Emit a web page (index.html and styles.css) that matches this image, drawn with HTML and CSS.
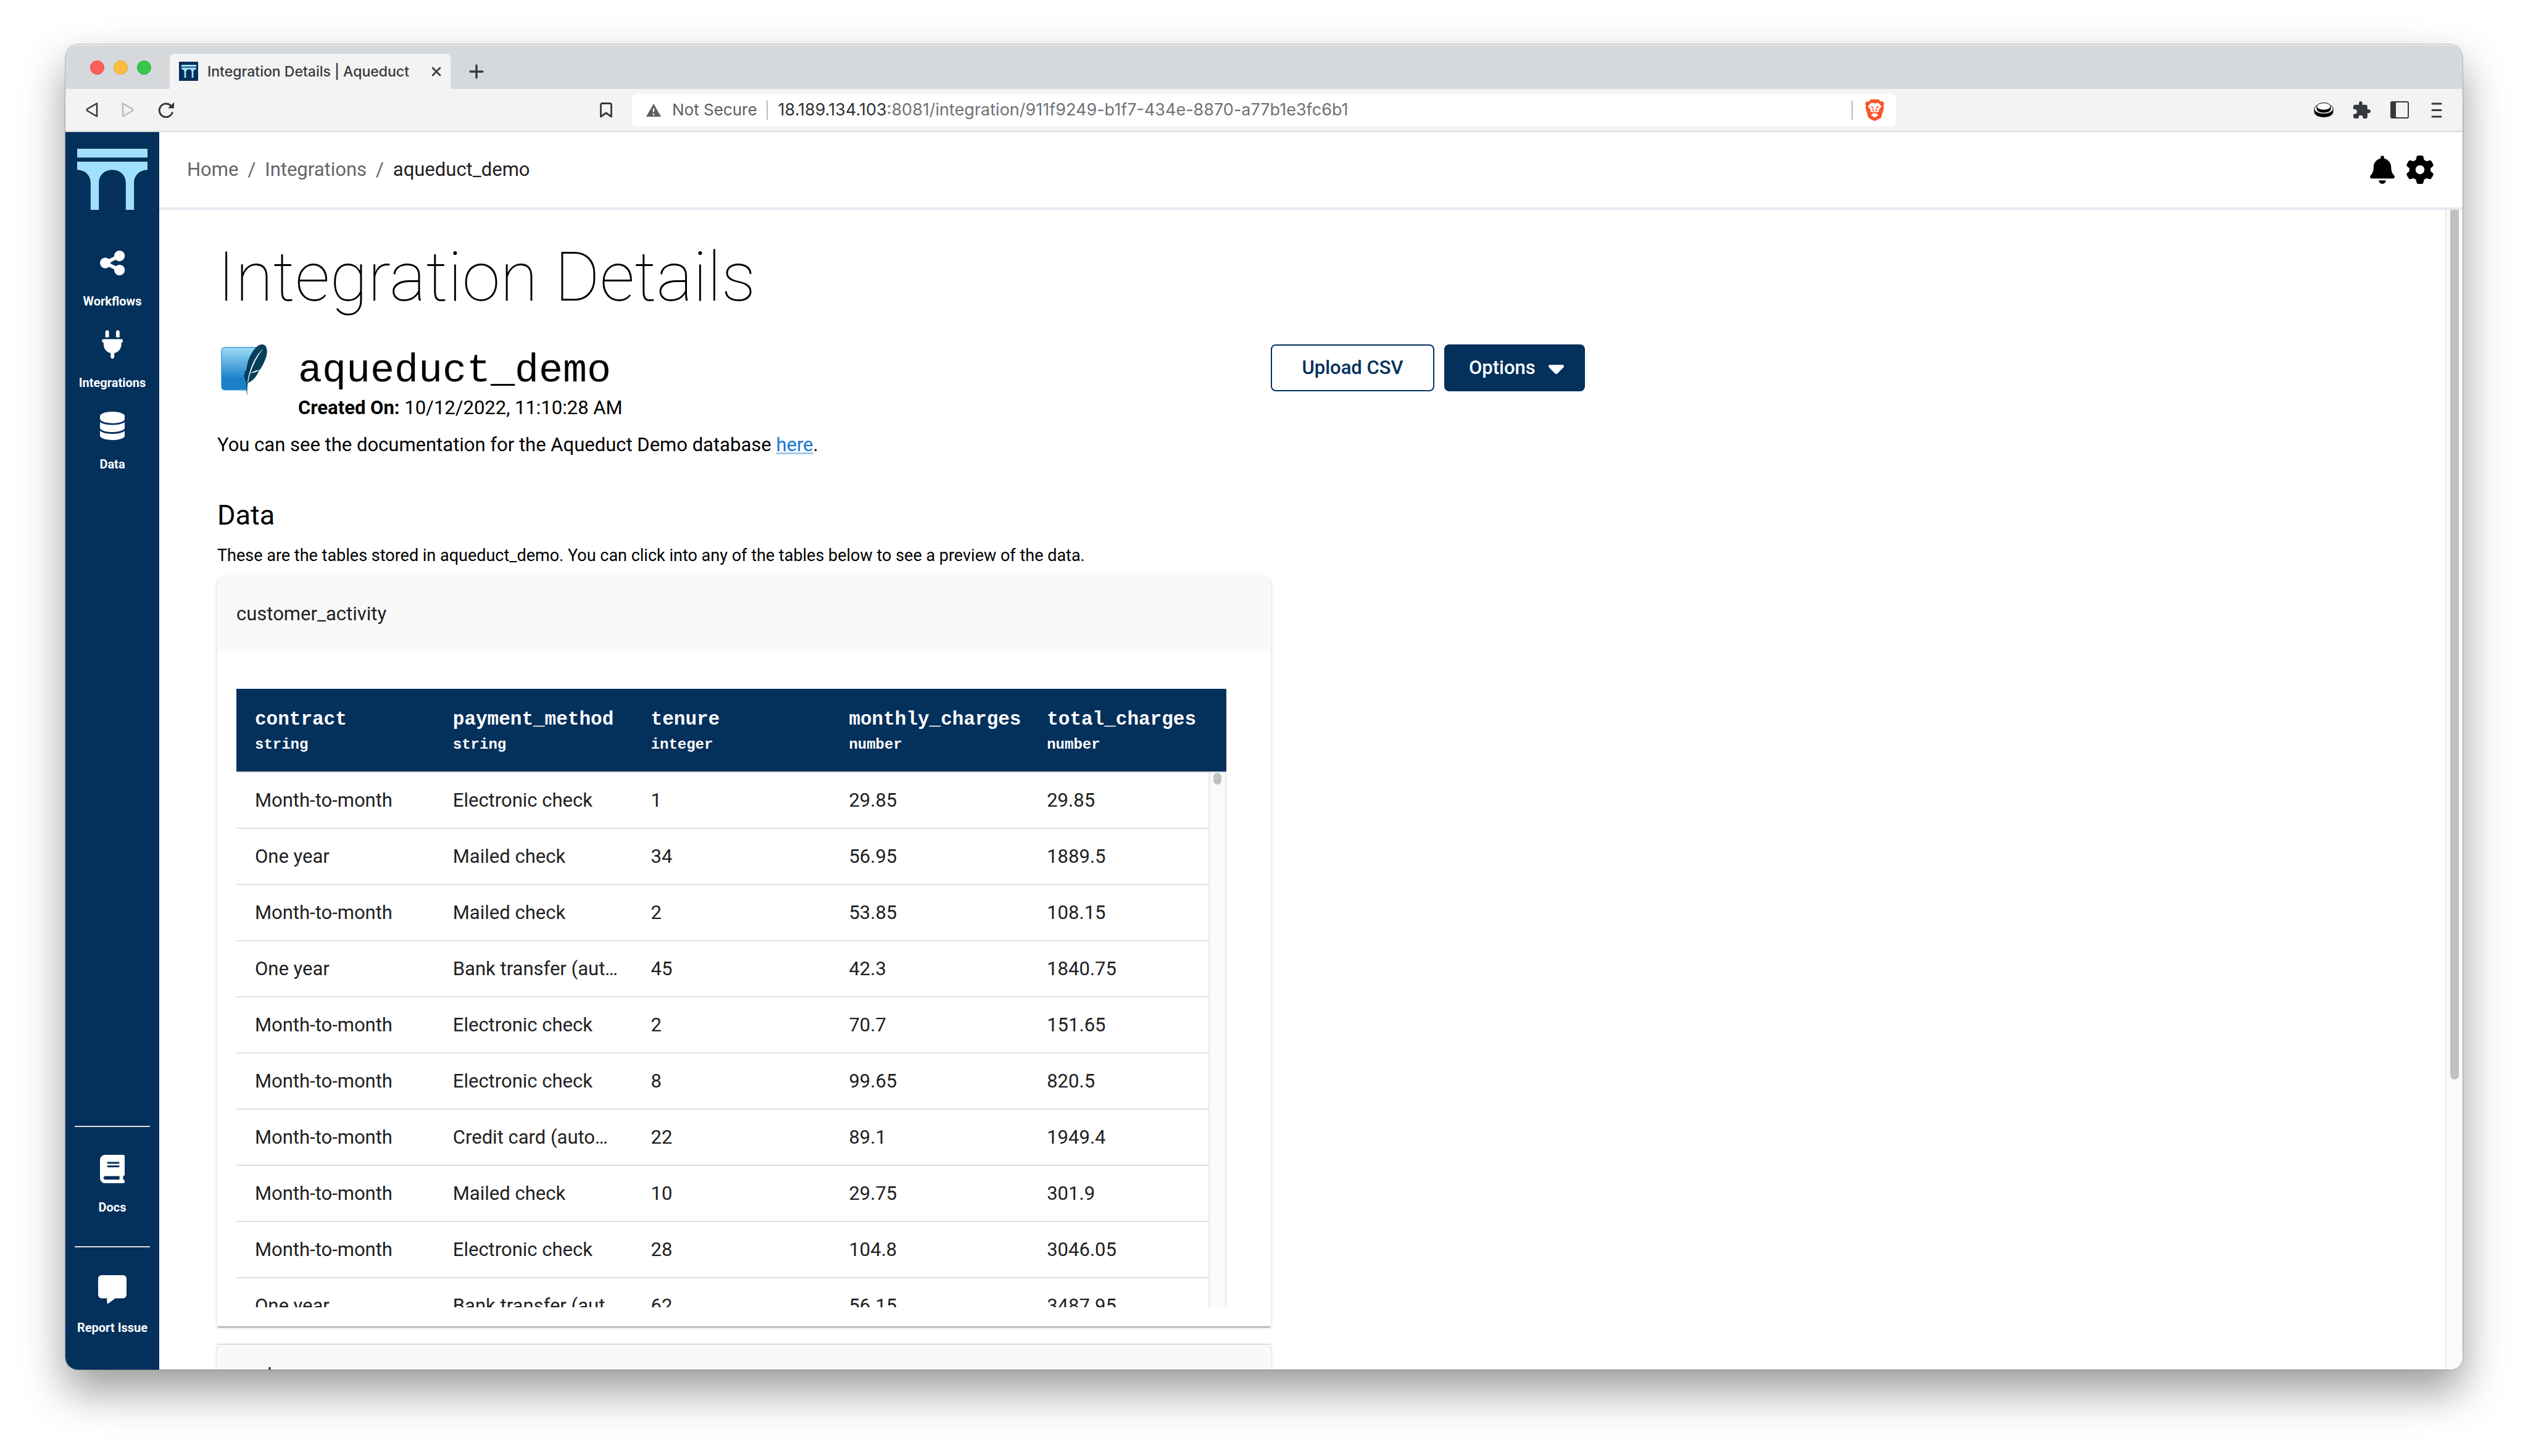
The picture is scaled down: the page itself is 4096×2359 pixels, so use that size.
FILE: index.html
```html
<!DOCTYPE html>
<html lang="en">
<head>
<meta charset="utf-8">
<meta name="viewport" content="width=device-width, initial-scale=1">
<title>Integration Details | Aqueduct</title>
<link rel="stylesheet" href="styles.css">
</head>
<body>
<svg class="sprite" aria-hidden="true">
  <symbol id="aqueduct" viewBox="0 0 120 104">
    <path d="M0 0H120V15H0zM0 22H120V36C106 36 97 46 97 58V104H83V58C83 45 73 36 60 36S37 45 37 58V104H23V58C23 46 14 36 0 36z"/>
  </symbol>
</svg>
<div class="window">
  <header class="tabstrip">
    <div class="lights"><span class="light red"></span><span class="light yellow"></span><span class="light green"></span></div>
    <div class="tab">
      <span class="favicon"><svg width="24" height="21"><use href="#aqueduct"/></svg></span>
      <span class="tab-title">Integration Details | Aqueduct</span>
      <button class="plain" aria-label="Close tab"><svg width="16" height="16" viewBox="0 0 16 16" stroke="#35393d" stroke-width="2.6" stroke-linecap="round"><path d="M2 2l12 12M14 2L2 14"/></svg></button>
    </div>
    <button class="plain new-tab" aria-label="New tab"><svg width="24" height="24" viewBox="0 0 24 24" stroke="#35393d" stroke-width="3.4" stroke-linecap="round"><path d="M12 2v20M2 12h20"/></svg></button>
  </header>

  <div class="toolbar">
    <div class="nav-buttons">
      <button class="plain" aria-label="Back"><svg width="20" height="26" viewBox="0 0 20 26" fill="none" stroke="#35393d" stroke-width="2.6" stroke-linejoin="round"><path d="M18 2.5v21L2.5 14.500q-1.200-1.500 0-3z"/></svg></button>
      <button class="plain" aria-label="Forward"><svg width="20" height="26" viewBox="0 0 20 26" fill="none" stroke="#bcbdbe" stroke-width="2.6" stroke-linejoin="round"><path d="M2 2.500v21l15.500-9q1.200-1.500 0-3z"/></svg></button>
      <button class="plain" aria-label="Reload"><svg width="28" height="26" viewBox="0 0 28 26" fill="none" stroke="#35393d" stroke-width="3"><path d="M22 6.500A10.800 10.800 0 1 0 24.500 16.500"/><path d="M26.500 1.500v8.500h-8.500z" fill="#35393d" stroke-width="1" stroke-linejoin="round"/></svg></button>
      <button class="plain bookmark" aria-label="Bookmark"><svg width="20" height="25" viewBox="0 0 20 25" fill="none" stroke="#35393d" stroke-width="2.8" stroke-linejoin="round"><path d="M1.500 23V4q0-2.500 2.500-2.500H16q2.500 0 2.500 2.500V23L10 17z"/></svg></button>
    </div>
    <div class="address">
      <svg width="24" height="21" viewBox="0 0 24 21"><path d="M12 0L24 21H0z" fill="#5b6064"/><path d="M12 7.500v6M12 16v2.500" stroke="#fff" stroke-width="2.400"/></svg>
      <span class="secure">Not Secure</span>
      <span class="rule"></span>
      <span class="url"><span class="host">18.189.134.103</span>:8081/integration/911f9249-b1f7-434e-8870-a77b1e3fc6b1</span>
      <span class="rule"></span>
      <button class="plain shield" aria-label="Brave Shields"><svg width="31" height="35" viewBox="0 0 62 70"><path d="M18 0H44L50 7L56 6L62 14L59 20L61 27L52 58Q50 62 31 70Q12 62 10 58L1 27L3 20L0 14L6 6L12 7z" fill="#fb542b"/><path d="M19 11L31 13L43 11L53 23L44 34L45 39L36 43V46L43 51L31 59L19 51L26 46V43L17 39L18 34L9 23z" fill="#fff"/><path d="M16 22L27 24L26 29L30 39L24 37L25 30zM46 22L35 24L36 29L32 39L38 37L37 30z" fill="#fb542b"/><path d="M24 42L31 47L38 42L31 40z" fill="#fb542b"/></svg></button>
    </div>
    <div class="extensions">
      <button class="plain" aria-label="Extension"><svg width="32" height="24" viewBox="0 0 32 24"><path d="M0.500 10v5C0.500 20 7 24 16 24s15.500-4 15.500-9v-5z"/><ellipse cx="16" cy="10.500" rx="15.200" ry="8" fill="#fff" stroke="#000"/><path d="M4.500 6.500v4C4.500 14 9 16.500 16 16.500s11.500-2.500 11.500-6v-4z"/><ellipse cx="16" cy="6.500" rx="11.200" ry="5.800" fill="#fff" stroke="#000"/></svg></button>
      <button class="plain" aria-label="Extensions"><svg width="28" height="28" viewBox="0 0 86 86"><path d="M28 18V9Q28 0 36 0T45 9V18H61Q70 18 70 27V41H76Q86 42 86 50T76 60H70V77Q70 86 61 86H48V79Q46 70 37 70T26 79V86H9Q0 86 0 77V64H8Q18 61 18 52T8 40H0V27Q0 18 9 18z" fill="#35393d"/></svg></button>
      <button class="plain" aria-label="Sidebar"><svg width="30" height="28" viewBox="0 0 30 28"><rect x="1" y="1" width="28" height="26" rx="2" fill="none" stroke="#35393d" stroke-width="2"/><path d="M1 1H9V27H1z" fill="#35393d"/></svg></button>
      <button class="plain menu" aria-label="Menu"><svg width="18" height="25" viewBox="0 0 18 25" stroke="#35393d" stroke-width="3" stroke-linecap="round"><path d="M2 2h14M2 12.500h14M2 23h14"/></svg></button>
    </div>
  </div>

  <div class="app">
    <nav class="sidebar">
      <a class="logo" href="#" aria-label="Aqueduct"><svg width="114" height="99"><use href="#aqueduct"/></svg></a>
      <a class="nav-item" href="#"><svg height="46" viewBox="0 0 448 512"><path d="M352 224c53 0 96-43 96-96s-43-96-96-96s-96 43-96 96c0 4 .2 8 .7 11.9l-94.1 47C145.4 170.200 121.900 160 96 160c-53 0-96 43-96 96s43 96 96 96c25.900 0 49.400-10.200 66.600-26.900l94.100 47c-.5 3.900-.7 7.800-.7 11.900c0 53 43 96 96 96s96-43 96-96s-43-96-96-96c-25.900 0-49.400 10.200-66.600 26.900l-94.100-47c.5-3.900 .7-7.800 .7-11.900s-.2-8-.7-11.900l94.100-47C302.600 213.800 326.100 224 352 224z"/></svg><span>Workflows</span></a>
      <a class="nav-item" href="#"><svg height="46" viewBox="0 0 384 512"><path d="M96 0C78.300 0 64 14.300 64 32v96h64V32c0-17.700-14.300-32-32-32zM288 0c-17.700 0-32 14.300-32 32v96h64V32c0-17.700-14.300-32-32-32zM32 160c-17.700 0-32 14.300-32 32s14.300 32 32 32v32c0 77.400 55 142 128 156.800V480c0 17.700 14.300 32 32 32s32-14.300 32-32V412.800C297 398 352 333.400 352 256V224c17.700 0 32-14.300 32-32s-14.300-32-32-32H32z"/></svg><span>Integrations</span></a>
      <a class="nav-item" href="#"><svg height="46" viewBox="0 0 448 512"><path d="M448 80v48c0 44.200-100.300 80-224 80S0 172.200 0 128V80C0 35.800 100.300 0 224 0S448 35.800 448 80zM393.200 214.700c20.800-7.400 39.900-16.900 54.800-28.600V288c0 44.200-100.300 80-224 80S0 332.200 0 288V186.100c14.900 11.800 34 21.200 54.800 28.600C99.700 230.700 159.500 240 224 240s124.300-9.300 169.200-25.300zM0 346.100c14.900 11.800 34 21.200 54.800 28.600C99.700 390.700 159.500 400 224 400s124.300-9.300 169.200-25.300c20.800-7.400 39.900-16.900 54.800-28.600V432c0 44.200-100.300 80-224 80S0 476.200 0 432V346.100z"/></svg><span>Data</span></a>
      <div class="nav-bottom">
        <a class="nav-item" href="#"><svg height="46" viewBox="0 0 448 512"><path d="M96 0C43 0 0 43 0 96V416c0 53 43 96 96 96H384h32c17.700 0 32-14.300 32-32s-14.300-32-32-32V384c17.700 0 32-14.300 32-32V32c0-17.700-14.300-32-32-32H384 96zm0 384H352v64H96c-17.700 0-32-14.300-32-32s14.300-32 32-32zm32-240c0-8.800 7.200-16 16-16H336c8.800 0 16 7.200 16 16s-7.200 16-16 16H144c-8.800 0-16-7.200-16-16zm16 48H336c8.800 0 16 7.200 16 16s-7.200 16-16 16H144c-8.800 0-16-7.200-16-16s7.200-16 16-16z"/></svg><span>Docs</span></a>
        <a class="nav-item" href="#"><svg height="46" viewBox="0 0 512 512"><path d="M64 0C28.700 0 0 28.700 0 64V352c0 35.300 28.700 64 64 64h96v80c0 6.100 3.400 11.600 8.800 14.300s11.900 2.100 16.800-1.500L309.300 416H448c35.300 0 64-28.700 64-64V64c0-35.300-28.700-64-64-64H64z"/></svg><span>Report Issue</span></a>
      </div>
    </nav>

    <div class="page">
      <div class="topbar">
        <nav class="crumbs" aria-label="Breadcrumb"><a href="#">Home</a><span>/</span><a href="#">Integrations</a><span>/</span><span class="current">aqueduct_demo</span></nav>
        <div class="top-actions">
          <button class="plain" aria-label="Notifications"><svg width="40" height="46" viewBox="0 0 448 512"><path d="M224 0c-17.700 0-32 14.300-32 32V51.200C119 66 64 130.600 64 208v18.800c0 47-17.300 92.400-48.500 127.600l-7.400 8.300c-8.400 9.400-10.400 22.900-5.300 34.400S19.400 416 32 416H416c12.600 0 24-7.400 29.200-18.900s3.100-25-5.300-34.400l-7.400-8.300C401.300 319.200 384 273.900 384 226.800V208c0-77.400-55-142-128-156.800V32c0-17.700-14.300-32-32-32zm45.300 493.300c12-12 18.700-28.300 18.700-45.300H224 160c0 17 6.700 33.300 18.700 45.300s28.300 18.700 45.300 18.700s33.300-6.700 45.300-18.700z"/></svg></button>
          <button class="plain" aria-label="Settings"><svg width="46" height="46" viewBox="0 0 512 512"><path d="M495.900 166.600c3.200 8.700 .5 18.400-6.400 24.600l-43.300 39.400c1.100 8.300 1.700 16.800 1.700 25.400s-.6 17.100-1.700 25.400l43.300 39.400c6.900 6.200 9.600 15.900 6.400 24.600c-4.400 11.900-9.700 23.300-15.800 34.300l-4.700 8.100c-6.600 11-14 21.400-22.100 31.200c-5.900 7.200-15.700 9.600-24.500 6.800l-55.700-17.700c-13.400 10.300-28.200 18.900-44 25.400l-12.500 57.100c-2 9.100-9 16.300-18.200 17.800c-13.800 2.300-28 3.500-42.500 3.500s-28.700-1.200-42.500-3.500c-9.200-1.500-16.200-8.700-18.200-17.800l-12.500-57.100c-15.800-6.500-30.600-15.100-44-25.400L83.100 425.900c-8.800 2.800-18.600 .3-24.500-6.800c-8.100-9.800-15.500-20.200-22.100-31.200l-4.700-8.100c-6.100-11-11.400-22.400-15.800-34.300c-3.200-8.700-.5-18.400 6.400-24.600l43.300-39.400C64.600 273.100 64 264.600 64 256s.6-17.100 1.700-25.400L22.400 191.200c-6.900-6.200-9.600-15.900-6.400-24.600c4.400-11.900 9.700-23.300 15.800-34.300l4.700-8.100c6.600-11 14-21.400 22.100-31.200c5.900-7.200 15.700-9.600 24.500-6.800l55.700 17.700c13.400-10.300 28.200-18.900 44-25.400l12.500-57.100c2-9.100 9-16.300 18.200-17.800C227.300 1.200 241.500 0 256 0s28.700 1.200 42.500 3.500c9.200 1.500 16.200 8.700 18.200 17.800l12.500 57.100c15.800 6.500 30.600 15.100 44 25.400l55.700-17.700c8.800-2.800 18.600-.3 24.500 6.800c8.100 9.800 15.500 20.200 22.100 31.200l4.700 8.100c6.100 11 11.400 22.400 15.800 34.300zM256 336c44.200 0 80-35.800 80-80s-35.800-80-80-80s-80 35.800-80 80s35.800 80 80 80z"/></svg></button>
        </div>
      </div>

      <div class="scroll-area">
        <main class="content">
          <h1>Integration Details</h1>
          <div class="summary">
            <div class="identity">
              <svg class="db-icon" width="75" height="83" viewBox="54 57 236 261">
                <defs><linearGradient id="sq" x1="0" y1="0" x2="0" y2="1"><stop offset="0" stop-color="#9cdcf6"/><stop offset=".75" stop-color="#1b80c8"/><stop offset="1" stop-color="#1b80c8"/></linearGradient></defs>
                <path d="M76 72H240L190 180L184 289H76Q57 289 57 270V91Q57 72 76 72z" fill="url(#sq)" stroke="#2f8fd3" stroke-width="4"/>
                <path d="M262 57C235 58 203 105 190 150L183 187C186 192 176 190 175 200C182 208 172 206 171 216C174 232 180 245 184 256C183 280 184 300 188 318C188 295 187 275 191 254C215 243 236 222 245 196C265 172 286 130 289 98C290 70 279 56 262 57z" fill="#053f59"/>
                <path d="M270 78C238 106 203 160 189 252L193 250C202 190 232 125 270 78z" fill="#fff"/>
                <path d="M209 202Q230 200 247 188Q230 190 209 202z" fill="#fff" stroke="#fff" stroke-width="2"/>
              </svg>
              <div class="identity-text">
                <h2 class="db-name">aqueduct_demo</h2>
                <p><strong>Created On:</strong> 10/12/2022, 11:10:28 AM</p>
              </div>
            </div>
            <div class="actions">
              <button class="btn outlined">Upload CSV</button>
              <button class="btn filled">Options <svg width="25" height="40" viewBox="0 0 320 512" fill="#fff"><path d="M137.400 374.600c12.500 12.500 32.800 12.500 45.300 0l128-128c9.200-9.200 11.900-22.900 6.900-34.900s-16.600-19.800-29.600-19.800L32 192c-12.900 0-24.600 7.800-29.600 19.800s-2.200 25.700 6.900 34.900l128 128z"/></svg></button>
            </div>
          </div>
          <p class="doc-note">You can see the documentation for the Aqueduct Demo database <a href="#">here</a>.</p>
          <h3>Data</h3>
          <p class="data-note">These are the tables stored in aqueduct_demo. You can click into any of the tables below to see a preview of the data.</p>

          <section class="accordion open">
            <button class="accordion-head" aria-expanded="true">customer_activity</button>
            <div class="accordion-body">
              <div class="table-box">
                <table>
                  <thead><tr>
                    <th>contract<small>string</small></th><th>payment_method<small>string</small></th><th>tenure<small>integer</small></th><th>monthly_charges<small>number</small></th><th>total_charges<small>number</small></th>
                  </tr></thead>
                  <tbody>
                    <tr><td>Month-to-month</td><td>Electronic check</td><td>1</td><td>29.85</td><td>29.85</td></tr>
                    <tr><td>One year</td><td>Mailed check</td><td>34</td><td>56.95</td><td>1889.5</td></tr>
                    <tr><td>Month-to-month</td><td>Mailed check</td><td>2</td><td>53.85</td><td>108.15</td></tr>
                    <tr><td>One year</td><td>Bank transfer (automatic)</td><td>45</td><td>42.3</td><td>1840.75</td></tr>
                    <tr><td>Month-to-month</td><td>Electronic check</td><td>2</td><td>70.7</td><td>151.65</td></tr>
                    <tr><td>Month-to-month</td><td>Electronic check</td><td>8</td><td>99.65</td><td>820.5</td></tr>
                    <tr><td>Month-to-month</td><td>Credit card (automatic)</td><td>22</td><td>89.1</td><td>1949.4</td></tr>
                    <tr><td>Month-to-month</td><td>Mailed check</td><td>10</td><td>29.75</td><td>301.9</td></tr>
                    <tr><td>Month-to-month</td><td>Electronic check</td><td>28</td><td>104.8</td><td>3046.05</td></tr>
                    <tr><td>One year</td><td>Bank transfer (automatic)</td><td>62</td><td>56.15</td><td>3487.95</td></tr>
                  </tbody>
                </table>
                <div class="table-track"><span></span></div>
              </div>
            </div>
          </section>
          <section class="accordion">
            <button class="accordion-head" aria-expanded="false">customers</button>
          </section>
        </main>
        <div class="page-track"><span></span></div>
      </div>
    </div>
  </div>
</div>
</body>
</html>
```
FILE: styles.css
```css
* { box-sizing: border-box; }

body {
  margin: 0;
  height: 100vh;
  padding: 72px 106px 140px;
  background: #fff;
  color: #000;
  font-family: Roboto, sans-serif;
  font-size: 31px;
  line-height: 44px;
  overflow: hidden;
}

h1, h2, h3, p { margin: 0; font-weight: 400; }
svg { display: block; flex: none; }
.sprite { position: absolute; width: 0; height: 0; }

.plain {
  display: block;
  padding: 0;
  border: 0;
  background: none;
  color: inherit;
}

.window {
  display: flex;
  flex-direction: column;
  height: 100%;
  border-radius: 20px;
  overflow: hidden;
  box-shadow: 0 0 0 1px rgba(0, 0, 0, .22), 0 34px 70px rgba(0, 0, 0, .4);
}

/* browser chrome */
.tabstrip {
  flex: none;
  display: flex;
  height: 72px;
  background: #d5d9dc;
  box-shadow: inset 0 2px 0 #e9ebed;
  font-family: Inter, sans-serif;
}
.lights {
  display: flex;
  gap: 15px;
  width: 169px;
  padding: 26px 0 0 40px;
}
.light { width: 23px; height: 23px; border-radius: 50%; border: 1px solid; }
.red { background: #fe5f57; border-color: #e24b41; }
.yellow { background: #febc40; border-color: #e1a032; }
.green { background: #35c84b; border-color: #29ab36; }
.tab {
  display: flex;
  align-items: center;
  width: 455px;
  height: 57px;
  margin-top: 15px;
  padding: 0 15px;
  border-radius: 8px 8px 0 0;
  background: #f3f3f3;
}
.favicon {
  display: flex;
  align-items: center;
  justify-content: center;
  width: 31px;
  height: 31px;
  background: #04305c;
  fill: #9fe1fd;
}
.tab-title {
  flex: 1;
  padding-left: 15px;
  color: #35393d;
  font-size: 23px;
  font-weight: 500;
  white-space: nowrap;
}
.new-tab { margin: 15px 0 0 30px; }

.toolbar {
  flex: none;
  display: grid;
  grid-template-columns: 1fr minmax(0, 2048px) 1fr;
  align-items: center;
  height: 70px;
  border-bottom: 2px solid #d5d9dc;
  background: #f3f3f3;
}
.nav-buttons {
  display: flex;
  align-items: center;
  gap: 38px;
  padding: 0 32px 0 33px;
}
.bookmark { margin-left: auto; }
.address {
  display: flex;
  align-items: center;
  height: 53px;
  padding: 0 19px 0 23px;
  border-radius: 8px;
  background: #fff;
  color: #6f7275;
  font: 27px/32px Inter, sans-serif;
  white-space: nowrap;
}
.secure { padding: 0 15px 0 18px; color: #5b6064; font-size: 26px; }
.rule { width: 2px; height: 31px; background: #b9bcbe; }
.url { flex: 1; padding-left: 17px; }
.host { color: #303336; }
.shield { margin-left: 20px; }
.extensions {
  display: flex;
  align-items: center;
  justify-content: flex-end;
  gap: 32px;
  padding-right: 33px;
}
.menu { margin-left: 4px; }

/* application shell */
.app { flex: 1; display: flex; min-height: 0; background: #fff; }
.sidebar {
  flex: none;
  display: flex;
  flex-direction: column;
  align-items: center;
  width: 152px;
  padding: 27px 0 5px;
  background: #04305c;
}
.logo { fill: #9fe1fd; margin-bottom: 63px; }
.nav-item {
  display: flex;
  flex-direction: column;
  align-items: center;
  gap: 26px;
  height: 132px;
  color: #fff;
  fill: #fff;
  font-size: 20px;
  font-weight: 700;
  line-height: 26px;
  text-decoration: none;
}
.nav-bottom { width: 122px; margin-top: auto; }
.nav-bottom .nav-item {
  height: 195px;
  padding-top: 45px;
  border-top: 2px solid #e0e0e0;
  white-space: nowrap;
}

.page { flex: 1; display: flex; flex-direction: column; min-width: 0; }
.topbar {
  flex: none;
  display: flex;
  justify-content: space-between;
  align-items: center;
  height: 126px;
  padding: 0 46px 0 45px;
  border-bottom: 4px solid #e5e8f0;
}
.crumbs { display: flex; gap: 15px; color: #666; }
.crumbs a { color: inherit; text-decoration: none; }
.crumbs .current { color: #212121; }
.top-actions { display: flex; gap: 18px; }

.scroll-area { flex: 1; display: flex; min-height: 0; overflow: hidden; }
.content { flex: 1; min-width: 0; padding: 41px 94px 0; }
.page-track {
  flex: none;
  width: 28px;
  padding: 0 6px;
  border-left: 2px solid #ececec;
  background: #fafafa;
}
.page-track span {
  display: block;
  height: 75%;
  border-radius: 0 0 8px 8px;
  background: #c1c1c1;
}

.content h1 { font-size: 112px; font-weight: 100; line-height: 136px; }
.summary { display: flex; margin-top: 41px; }
.identity { display: flex; gap: 50px; width: 1707px; padding-left: 6px; }
.identity-text { padding-top: 5px; }
.db-name { font: 65px/76px "Liberation Mono", monospace; }
.actions { display: flex; align-items: flex-start; gap: 16px; }
.btn {
  display: flex;
  align-items: center;
  justify-content: center;
  gap: 15px;
  height: 76px;
  border: 2px solid #04305c;
  border-radius: 8px;
  font: 500 31px/44px Roboto, sans-serif;
}
.outlined { width: 265px; background: #fff; color: #04305c; }
.filled { width: 228px; padding: 0 32px 0 38px; justify-content: space-between; background: #04305c; color: #fff; }
.doc-note { margin-top: 16px; }
.doc-note a { color: #1976d2; text-decoration-color: rgba(25, 118, 210, .4); }
.content h3 { margin-top: 62px; font-size: 45px; line-height: 60px; }
.data-note { margin: 15px 0 13px; font-size: 27px; line-height: 40px; }

.accordion {
  max-width: 1707px;
  background: #fff;
  box-shadow: 0 4px 2px -2px rgba(0, 0, 0, .2), 0 2px 2px rgba(0, 0, 0, .14), 0 2px 6px rgba(0, 0, 0, .12);
}
.accordion.open { margin-bottom: 28px; border-radius: 8px 8px 0 0; }
.accordion-head {
  display: block;
  width: 100%;
  height: 95px;
  padding: 0 31px;
  border: 0;
  border-top: 2px solid #dedede;
  background: #f9f9f9;
  color: #212121;
  font: 31px/44px Roboto, sans-serif;
  text-align: left;
}
.open .accordion-head { height: 123px; border-top: 0; border-radius: 8px 8px 0 0; }
.accordion-body { padding: 60px 72px 31px 31px; }

.table-box { position: relative; height: 1002px; overflow: hidden; }
table { width: 100%; table-layout: fixed; border-collapse: separate; border-spacing: 0; }
th {
  height: 136px;
  padding: 29px 0 0 30px;
  border-bottom: 2px solid #e0e0e0;
  background: #04305c;
  color: #fff;
  font: 700 31px/42px "Liberation Mono", monospace;
  text-align: left;
  vertical-align: top;
  white-space: nowrap;
}
th small { display: block; margin-top: 4px; font-size: 24px; line-height: 32px; }
td {
  height: 91px;
  padding: 0 16px 0 30px;
  border-bottom: 2px solid #e0e0e0;
  color: #212121;
  white-space: nowrap;
  overflow: hidden;
  text-overflow: ellipsis;
}
.table-track {
  position: absolute;
  top: 136px;
  right: 0;
  bottom: 0;
  width: 29px;
  padding: 0 6px;
  border: solid #e8e8e8;
  border-width: 0 2px;
  background: #fafafa;
}
.table-track span { display: block; height: 19px; border-radius: 8px; background: #c1c1c1; }
```
